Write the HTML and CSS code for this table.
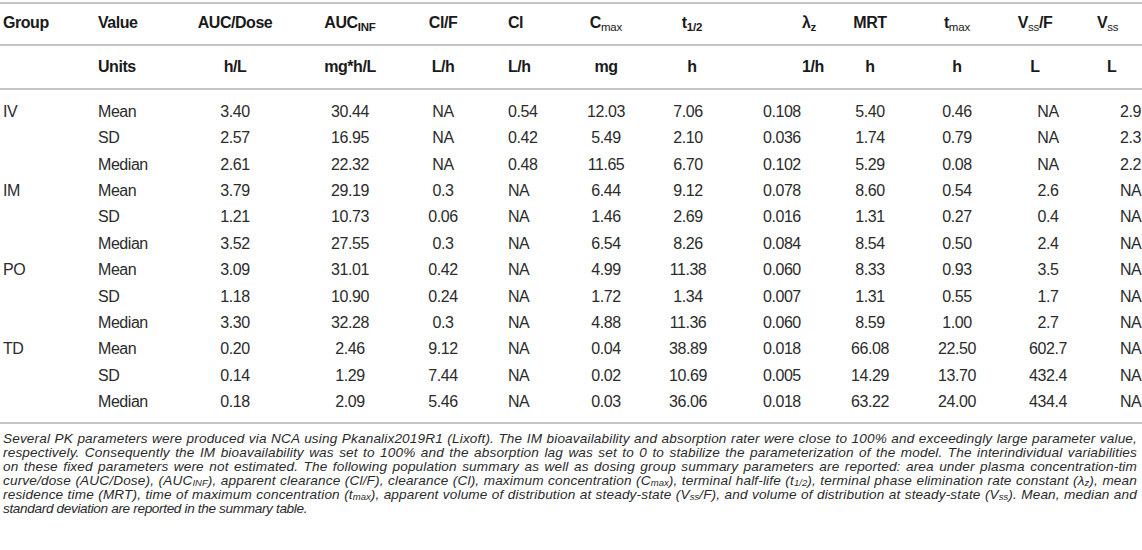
FILE: index.html
```html
<!DOCTYPE html>
<html lang="en">
<head>
<meta charset="utf-8">
<title>PK summary table</title>
<link rel="stylesheet" href="styles.css">
</head>
<body>
<div class="wrap">
<table class="pk">
  <colgroup>
    <col class="c-group"><col class="c-value"><col class="c-auc"><col class="c-aucinf"><col class="c-clf"><col class="c-cl"><col class="c-cmax"><col class="c-thalf"><col class="c-lz"><col class="c-mrt"><col class="c-tmax"><col class="c-vssf"><col class="c-vss">
  </colgroup>
  <thead>
    <tr class="hrow">
      <th class="l g">Group</th>
      <th class="l v">Value</th>
      <th>AUC/Dose</th>
      <th>AUC<sub class="s">INF</sub></th>
      <th>Cl/F</th>
      <th class="l cl">Cl</th>
      <th>C<sub class="s n">max</sub></th>
      <th class="th">t<sub class="s">1/2</sub></th>
      <th class="l lzh">λ<sub class="s">z</sub></th>
      <th>MRT</th>
      <th>t<sub class="s n">max</sub></th>
      <th class="vsfh">V<sub class="s n">ss</sub>/F</th>
      <th class="l vsh">V<sub class="s n">ss</sub></th>
    </tr>
    <tr class="urow">
      <th class="l g"></th>
      <th class="l v">Units</th>
      <th>h/L</th>
      <th>mg*h/L</th>
      <th>L/h</th>
      <th class="l cl">L/h</th>
      <th>mg</th>
      <th class="th">h</th>
      <th class="l lzh">1/h</th>
      <th>h</th>
      <th>h</th>
      <th class="vsfh">L</th>
      <th class="l vsu">L</th>
    </tr>
  </thead>
  <tbody>
    <tr class="first"><td class="l g">IV</td><td class="l v">Mean</td><td>3.40</td><td>30.44</td><td>NA</td><td class="l cl">0.54</td><td>12.03</td><td>7.06</td><td class="l lz">0.108</td><td>5.40</td><td>0.46</td><td class="vsf">NA</td><td class="l vs">2.9</td></tr>
    <tr><td class="l g"></td><td class="l v">SD</td><td>2.57</td><td>16.95</td><td>NA</td><td class="l cl">0.42</td><td>5.49</td><td>2.10</td><td class="l lz">0.036</td><td>1.74</td><td>0.79</td><td class="vsf">NA</td><td class="l vs">2.3</td></tr>
    <tr><td class="l g"></td><td class="l v">Median</td><td>2.61</td><td>22.32</td><td>NA</td><td class="l cl">0.48</td><td>11.65</td><td>6.70</td><td class="l lz">0.102</td><td>5.29</td><td>0.08</td><td class="vsf">NA</td><td class="l vs">2.2</td></tr>
    <tr><td class="l g">IM</td><td class="l v">Mean</td><td>3.79</td><td>29.19</td><td>0.3</td><td class="l cl">NA</td><td>6.44</td><td>9.12</td><td class="l lz">0.078</td><td>8.60</td><td>0.54</td><td class="vsf">2.6</td><td class="l vs">NA</td></tr>
    <tr><td class="l g"></td><td class="l v">SD</td><td>1.21</td><td>10.73</td><td>0.06</td><td class="l cl">NA</td><td>1.46</td><td>2.69</td><td class="l lz">0.016</td><td>1.31</td><td>0.27</td><td class="vsf">0.4</td><td class="l vs">NA</td></tr>
    <tr><td class="l g"></td><td class="l v">Median</td><td>3.52</td><td>27.55</td><td>0.3</td><td class="l cl">NA</td><td>6.54</td><td>8.26</td><td class="l lz">0.084</td><td>8.54</td><td>0.50</td><td class="vsf">2.4</td><td class="l vs">NA</td></tr>
    <tr><td class="l g">PO</td><td class="l v">Mean</td><td>3.09</td><td>31.01</td><td>0.42</td><td class="l cl">NA</td><td>4.99</td><td>11.38</td><td class="l lz">0.060</td><td>8.33</td><td>0.93</td><td class="vsf">3.5</td><td class="l vs">NA</td></tr>
    <tr><td class="l g"></td><td class="l v">SD</td><td>1.18</td><td>10.90</td><td>0.24</td><td class="l cl">NA</td><td>1.72</td><td>1.34</td><td class="l lz">0.007</td><td>1.31</td><td>0.55</td><td class="vsf">1.7</td><td class="l vs">NA</td></tr>
    <tr><td class="l g"></td><td class="l v">Median</td><td>3.30</td><td>32.28</td><td>0.3</td><td class="l cl">NA</td><td>4.88</td><td>11.36</td><td class="l lz">0.060</td><td>8.59</td><td>1.00</td><td class="vsf">2.7</td><td class="l vs">NA</td></tr>
    <tr><td class="l g">TD</td><td class="l v">Mean</td><td>0.20</td><td>2.46</td><td>9.12</td><td class="l cl">NA</td><td>0.04</td><td>38.89</td><td class="l lz">0.018</td><td>66.08</td><td>22.50</td><td class="vsf">602.7</td><td class="l vs">NA</td></tr>
    <tr><td class="l g"></td><td class="l v">SD</td><td>0.14</td><td>1.29</td><td>7.44</td><td class="l cl">NA</td><td>0.02</td><td>10.69</td><td class="l lz">0.005</td><td>14.29</td><td>13.70</td><td class="vsf">432.4</td><td class="l vs">NA</td></tr>
    <tr class="last"><td class="l g"></td><td class="l v">Median</td><td>0.18</td><td>2.09</td><td>5.46</td><td class="l cl">NA</td><td>0.03</td><td>36.06</td><td class="l lz">0.018</td><td>63.22</td><td>24.00</td><td class="vsf">434.4</td><td class="l vs">NA</td></tr>
  </tbody>
</table>
<div class="note">
  <span class="line">Several PK parameters were produced via NCA using Pkanalix2019R1 (Lixoft). The IM bioavailability and absorption rater were close to 100% and exceedingly large parameter value,</span>
  <span class="line">respectively. Consequently the IM bioavailability was set to 100% and the absorption lag was set to 0 to stabilize the parameterization of the model. The interindividual variabilities</span>
  <span class="line">on these fixed parameters were not estimated. The following population summary as well as dosing group summary parameters are reported: area under plasma concentration-tim</span>
  <span class="line">curve/dose (AUC/Dose), (AUC<sub class="fs">INF</sub>), apparent clearance (Cl/F), clearance (Cl), maximum concentration (C<sub class="fs">max</sub>), terminal half-life (t<sub class="fs">1/2</sub>), terminal phase elimination rate constant (λ<sub class="fs">z</sub>), mean</span>
  <span class="line">residence time (MRT), time of maximum concentration (t<sub class="fs">max</sub>), apparent volume of distribution at steady-state (V<sub class="fs">ss</sub>/F), and volume of distribution at steady-state (V<sub class="fs">ss</sub>). Mean, median and</span>
  <span class="line end">standard deviation are reported in the summary table.</span>
</div>
</div>
</body>
</html>
```

FILE: styles.css
```css
html, body {
  margin: 0;
  padding: 0;
  background: #ffffff;
}
body {
  font-family: "Liberation Sans", Arial, Helvetica, sans-serif;
  color: #222222;
  overflow: hidden;
}
.wrap {
  width: 1142px;
  padding-top: 2px;
}
.pk {
  width: 1142px;
  table-layout: fixed;
  border-collapse: collapse;
  font-size: 16px;
  letter-spacing: -0.45px;
}
.c-group { width: 90px; }
.c-value { width: 90px; }
.c-auc { width: 110px; }
.c-aucinf { width: 120px; }
.c-clf { width: 66px; }
.c-cl { width: 84px; }
.c-cmax { width: 92px; }
.c-thalf { width: 72px; }
.c-lz { width: 96px; }
.c-mrt { width: 100px; }
.c-tmax { width: 74px; }
.c-vssf { width: 100px; }
.c-vss { width: 48px; }

.pk th, .pk td {
  padding: 0;
  text-align: center;
  white-space: nowrap;
  overflow: visible;
}
.pk th {
  font-weight: bold;
  color: #1a1a1a;
}
.hrow th {
  border-top: 2px solid #c4c4c4;
  height: 38px;
  line-height: 36px;
  padding-bottom: 2px;
  vertical-align: middle;
}
.urow th {
  border-top: 2px solid #c4c4c4;
  border-bottom: 2px solid #c4c4c4;
  height: 42px;
  line-height: 42px;
  vertical-align: middle;
}
.pk td {
  height: 26.36px;
  line-height: 26.36px;
  font-weight: normal;
  color: #2b2b2b;
}
.pk tr.first td {
  padding-top: 9px;
}
.pk tr.last td {
  padding-bottom: 7px;
  border-bottom: 2px solid #c4c4c4;
}
.pk .l { text-align: left; }
.pk .g { padding-left: 3px; }
.pk .v { padding-left: 8px; }
.pk .cl { padding-left: 32px; }
.pk .th { padding-left: 8px; }
.pk .lz { padding-left: 39px; }
.pk .lzh { padding-left: 78px; }
.pk .vsf { padding-left: 8px; }
.pk .vsfh { padding-right: 18px; }
.pk .vs { padding-left: 26px; }
.pk .vsh { padding-left: 3px; }
.pk .vsu { padding-left: 13px; }

.s {
  font-size: 0.72em;
  line-height: 0;
  vertical-align: -0.3em;
  letter-spacing: -0.2px;
}
.s.n { font-weight: normal; }

.note {
  width: 1134px;
  padding: 8px 0 0 3px;
  font-style: italic;
  font-size: 13.6px;
  line-height: 14px;
  color: #2a2a2a;
}
.note .line {
  display: block;
  text-align: justify;
  text-align-last: justify;
  white-space: nowrap;
  letter-spacing: 0.15px;
}
.note .line.end {
  text-align-last: left;
  letter-spacing: -0.35px;
}
.fs {
  font-size: 0.7em;
  line-height: 0;
  vertical-align: -0.15em;
  letter-spacing: 0;
}
```
